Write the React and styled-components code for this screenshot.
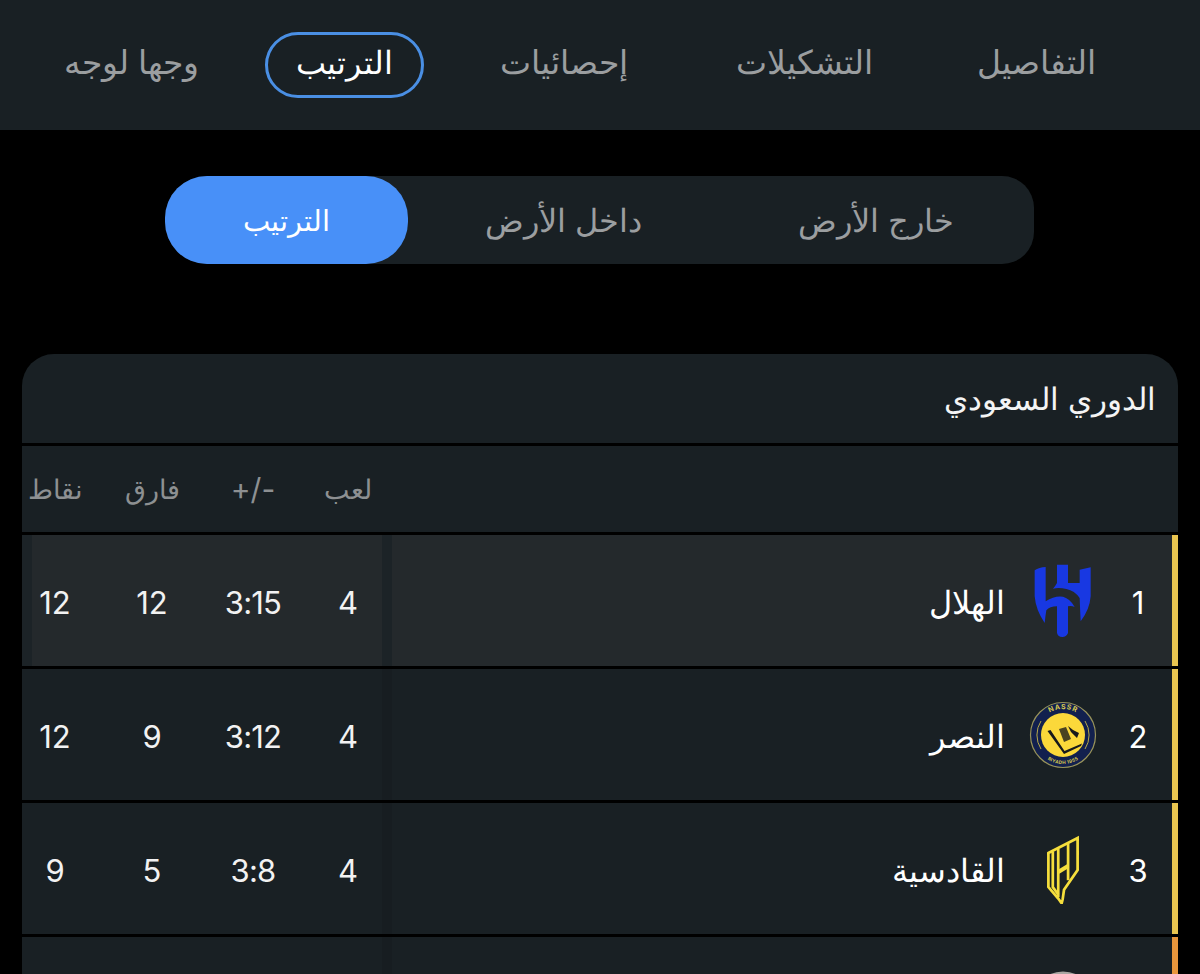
import React from "react";
import styled, { createGlobalStyle } from "styled-components";

const GlobalStyle = createGlobalStyle`
	html, body {
		margin: 0;
		background: #000;
		overflow: hidden;
	}
	body {
		direction: rtl;
		font-family: "Inter", "Liberation Sans", sans-serif;
		color: #fff;
	}
`;

const Page = styled.div`
	width: 1200px;
	height: 974px;
	overflow: hidden;
`;

const TabBar = styled.nav`
	height: 130px;
	box-sizing: border-box;
	background: #192024;
	display: flex;
	align-items: center;
	padding-right: 69px;
	gap: 35px;
`;
const Tab = styled.div`
	width: ${(p) => p.$w}px;
	height: 66px;
	box-sizing: border-box;
	padding-bottom: 6px;
	display: flex;
	align-items: center;
	justify-content: center;
	border-radius: 33px;
	font-size: ${(p) => (p.$active ? "32px" : "33px")};
	white-space: nowrap;
	color: ${(p) => (p.$active ? "#fff" : "#9b9ea0")};
	border: 3px solid ${(p) => (p.$active ? "#4a8fe4" : "transparent")};
`;

const SegmentWrap = styled.div`
	padding: 46px 166px 90px 165px;
`;
const Segment = styled.div`
	height: 88px;
	background: #192024;
	border-radius: 42px 32px 32px 42px;
	display: flex;
	justify-content: space-between;
`;
const SegmentItem = styled.div`
	width: ${(p) => p.$w}px;
	display: flex;
	align-items: center;
	justify-content: center;
	font-size: ${(p) => (p.$active ? "29px" : "32px")};
	white-space: nowrap;
	color: ${(p) => (p.$active ? "#fff" : "#9b9ea0")};
	background: ${(p) => (p.$active ? "#4890f8" : "transparent")};
	border-radius: ${(p) => (p.$active ? "42px" : "0")};
`;

const Card = styled.section`
	margin: 0 22px;
	border-radius: 32px 32px 0 0;
	overflow: hidden;
	background: #000;
	display: flex;
	flex-direction: column;
	gap: 3px;
`;
const CardTitle = styled.h2`
	margin: 0;
	height: 89px;
	box-sizing: border-box;
	padding-right: 22px;
	background: #192024;
	display: flex;
	align-items: center;
	font-size: 30.5px;
	font-weight: 400;
	color: #f4f4f4;
`;
const HeadRow = styled.div`
	height: 86px;
	background: #192024;
	display: flex;
	justify-content: flex-end;
`;
const Row = styled.div`
	height: 131px;
	flex: none;
	display: flex;
	border-right: 6px solid ${(p) => p.$accent};
	background: ${(p) => (p.$active ? "#24292c" : "#192024")};
`;
const Team = styled.div`
	flex: 1;
	display: flex;
	align-items: center;
	padding-top: 3px;
`;
const Rank = styled.div`
	width: 68px;
	text-align: center;
	font-size: 31px;
`;
const LogoBox = styled.div`
	width: 82px;
	height: 90px;
	margin-top: -3px;
	display: flex;
	align-items: center;
	justify-content: center;
`;
const TeamName = styled.div`
	margin-right: 17px;
	font-size: 32px;
`;
const Shadow = styled.div`
	width: 10px;
	background: ${(p) => (p.$active ? "#1c2327" : "#171d21")};
`;
const Stats = styled.div`
	width: 360px;
	box-sizing: border-box;
	display: grid;
	grid-template-columns: 68px 122px 80px 90px;
	align-items: center;
	padding-top: ${(p) => (p.$head ? "0" : "3px")};
	background: ${(p) => (p.$active ? "linear-gradient(to left, #24292c 350px, #1c2327 350px)" : "transparent")};
`;
const StatCell = styled.div`
	text-align: center;
	font-size: ${(p) => (p.$head ? "27px" : "31px")};
	color: ${(p) => (p.$head ? "#8d9092" : "#f2f2f2")};
	white-space: nowrap;
	letter-spacing: ${(p) => (p.$tight ? "-0.8px" : "0")};
	&:last-child {
		padding-right: 24px;
	}
`;
const Latin = styled.span`
	direction: ltr;
	unicode-bidi: isolate;
	font-size: 30px;
`;

const HilalLogo = () => (
	<svg width="60" height="75" viewBox="100 75 180 225">
		<path
			fill="#1838e2"
			d="M172 80 L205 80 L205 135 L240 135 L240 95 L273 88 L273 175 Q270 215 243 250 Q241 210 240 180 Q225 158 200 153 Q178 148 160 152 Q166 146 172 135 Z"
		/>
		<path
			fill="#1838e2"
			d="M105 97 Q118 88 138 87 L138 190 Q165 172 190 176 Q212 182 225 207 Q215 202 205 205 L205 285 Q200 297 188 297 Q175 297 172 285 L172 205 Q150 205 140 217 Q137 235 135 255 Q108 215 105 175 Z"
		/>
	</svg>
);

const NassrLogo = () => (
	<svg width="68" height="68" viewBox="0 0 68 68">
		<defs>
			<path id="nassrTop" d="M8 34 A26 26 0 0 1 60 34" />
			<path id="nassrBottom" d="M5 34 A29 29 0 0 0 63 34" />
		</defs>
		<circle cx="34" cy="34" r="32.5" fill="#12204e" stroke="#97925a" strokeWidth="1.2" />
		<path d="M12 20 A26 26 0 0 0 12 48" fill="none" stroke="#b7a94a" strokeWidth="1" />
		<path d="M56 20 A26 26 0 0 1 56 48" fill="none" stroke="#b7a94a" strokeWidth="1" />
		<circle cx="34" cy="34" r="22" fill="#fbd83a" />
		<path d="M18.5 30 L21.5 29 L35.5 50 L53 42.5 L52 45 L35 53 Z" fill="#17191c" />
		<path d="M30 28 L37 26 L42 38 L35 41 Z" fill="#4a4320" />
		<path d="M39 25 L44 29 L50 32 L48 37 L42 31 Z" fill="#17191c" />
		<text fontSize="7" fontWeight="700" fill="#d8c94f" fontFamily="Inter, sans-serif" letterSpacing="0.8">
			<textPath href="#nassrTop" startOffset="50%" textAnchor="middle">
				NASSR
			</textPath>
		</text>
		<text fontSize="4.6" fontWeight="700" fill="#d8c94f" fontFamily="Inter, sans-serif" letterSpacing="0.3">
			<textPath href="#nassrBottom" startOffset="50%" textAnchor="middle">
				RIYADH 1955
			</textPath>
		</text>
	</svg>
);

const QadsiahLogo = () => (
	<svg width="34" height="70" viewBox="140 76 100 206">
		<g fill="none" stroke="#f5de3c" strokeWidth="8" strokeLinejoin="miter">
			<path d="M147 132 L233 88 L233 182 L193 240 L189 268 L186 280 L176 266 L147 232 Z" />
			<path d="M160 128 L160 232 L176 254" />
			<path d="M176 120 L176 262" />
			<path d="M205 104 L205 212" />
			<path d="M176 188 L205 170" strokeWidth="12" />
		</g>
	</svg>
);

const FourthLogo = () => (
	<svg width="64" height="64" viewBox="0 0 64 64">
		<circle cx="32" cy="32" r="30" fill="#1b2226" stroke="#a9a6a2" strokeWidth="3" />
	</svg>
);

const tabs = [
	{ label: "التفاصيل", w: 190 },
	{ label: "التشكيلات", w: 203 },
	{ label: "إحصائيات", w: 209 },
	{ label: "الترتيب", w: 159, active: true },
	{ label: "وجها لوجه", w: 197 },
];

const segments = [
	{ label: "خارج الأرض", w: 316 },
	{ label: "داخل الأرض", w: 311 },
	{ label: "الترتيب", w: 243, active: true },
];

const teams = [
	{ rank: 1, name: "الهلال", Logo: HilalLogo, played: 4, goals: "3:15", diff: 12, pts: 12, accent: "#e9c550", active: true },
	{ rank: 2, name: "النصر", Logo: NassrLogo, played: 4, goals: "3:12", diff: 9, pts: 12, accent: "#e9c550" },
	{ rank: 3, name: "القادسية", Logo: QadsiahLogo, played: 4, goals: "3:8", diff: 5, pts: 9, accent: "#e9c550" },
	{ rank: "", name: "", Logo: FourthLogo, played: "", goals: "", diff: "", pts: "", accent: "#e8963c" },
];

export default function App() {
	return (
		<Page>
			<GlobalStyle />
			<TabBar>
				{tabs.map((t) => (
					<Tab key={t.label} $w={t.w} $active={t.active}>
						{t.label}
					</Tab>
				))}
			</TabBar>
			<SegmentWrap>
				<Segment>
					{segments.map((s) => (
						<SegmentItem key={s.label} $w={s.w} $active={s.active}>
							{s.label}
						</SegmentItem>
					))}
				</Segment>
			</SegmentWrap>
			<Card>
				<CardTitle>الدوري السعودي</CardTitle>
				<HeadRow>
					<Stats $head>
						<StatCell $head>لعب</StatCell>
						<StatCell $head>
							<Latin>+/-</Latin>
						</StatCell>
						<StatCell $head>فارق</StatCell>
						<StatCell $head>نقاط</StatCell>
					</Stats>
				</HeadRow>
				{teams.map((t, i) => (
					<Row key={i} $accent={t.accent} $active={t.active}>
						<Team>
							<Rank>{t.rank}</Rank>
							<LogoBox>
								<t.Logo />
							</LogoBox>
							<TeamName>{t.name}</TeamName>
						</Team>
						<Shadow $active={t.active} />
						<Stats $active={t.active}>
							<StatCell>{t.played}</StatCell>
							<StatCell $tight>{t.goals}</StatCell>
							<StatCell>{t.diff}</StatCell>
							<StatCell>{t.pts}</StatCell>
						</Stats>
					</Row>
				))}
			</Card>
		</Page>
	);
}
